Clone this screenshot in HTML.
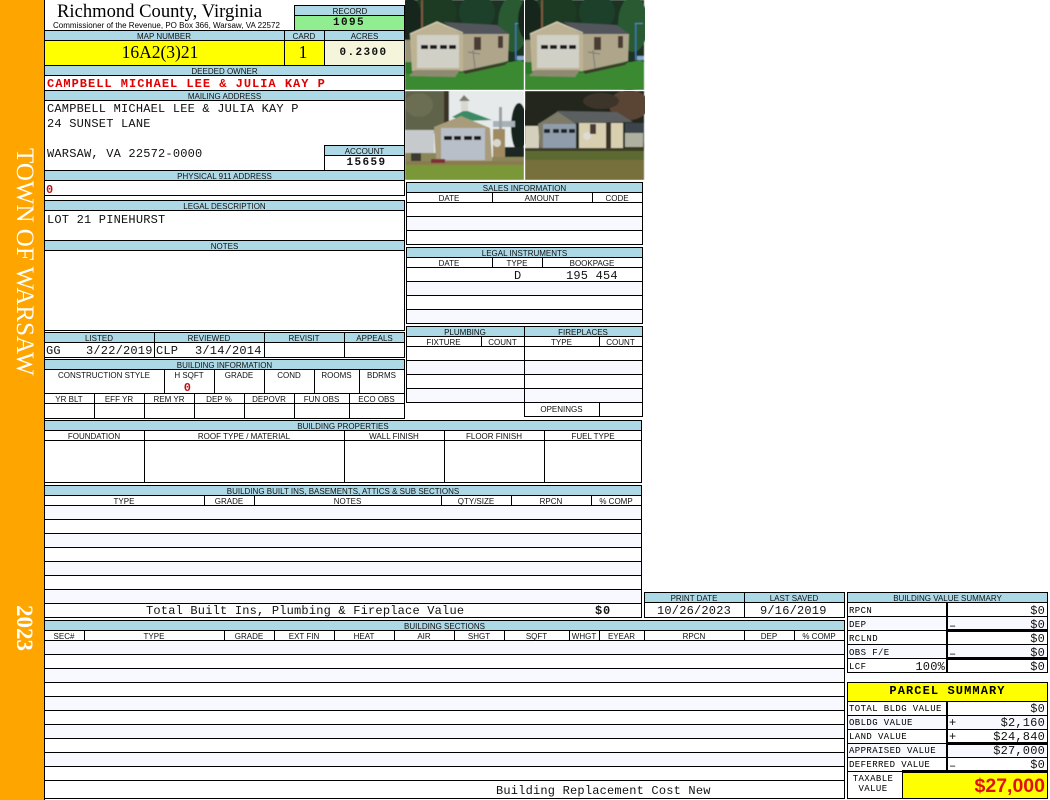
<!DOCTYPE html>
<html><head><meta charset="utf-8"><title>Richmond County, Virginia</title>
<style>
html,body{margin:0;padding:0;background:#fff}
body{position:relative;width:1050px;height:800px;overflow:hidden;font-family:"Liberation Sans",Arial,sans-serif;color:#000}
div,b,u,s,em,svg{position:absolute;display:block}
b{height:1px;background:#000}
u{width:1px;background:#000}
s{background:#add8e6}
em{background:#f8f8ff}
.t{font:8px/10px "Liberation Sans",Arial,sans-serif;text-align:center;height:10px;white-space:nowrap;color:#111;margin-top:1px}
.m{font:12px/14px "Liberation Mono",monospace;letter-spacing:.2px;white-space:pre;color:#111}
.k{font:bold 11px/14px "Liberation Mono",monospace;letter-spacing:1.4px;text-align:center;white-space:pre;color:#111}
.l{font:9px/14px "Liberation Mono",monospace;letter-spacing:.4px;white-space:pre;color:#000}
.r{text-align:right}
</style></head><body>
<!-- sidebar -->
<div style="left:0;top:0;width:44px;height:800px;background:#ffa500"></div>
<u style="left:44px;top:0;height:800px"></u>
<div style="left:10px;top:148px;writing-mode:vertical-rl;font:25px/28px 'Liberation Serif',serif;color:#fff;white-space:nowrap">TOWN OF WARSAW</div>
<div style="left:11px;top:605px;writing-mode:vertical-rl;font:bold 23px/26px 'Liberation Serif',serif;color:#fff">2023</div>

<!-- title -->
<div style="left:57px;top:2px;font:18.6px/20px 'Liberation Serif',serif;white-space:nowrap">Richmond County, Virginia</div>
<div style="left:53px;top:21px;font:8px/10px 'Liberation Sans',sans-serif;white-space:nowrap;letter-spacing:.01px">Commissioner of the Revenue, PO Box 366, Warsaw, VA 22572</div>

<!-- record -->
<s style="left:295px;top:6px;width:110px;height:9px"></s>
<div style="left:295px;top:16px;width:110px;height:14px;background:#90ee90"></div>
<b style="left:294px;top:5px;width:111px"></b><b style="left:294px;top:15px;width:111px"></b>
<u style="left:294px;top:5px;height:26px"></u>
<div class="t" style="left:295px;top:6px;width:110px">RECORD</div>
<div class="k" style="left:294px;top:17px;width:110px;line-height:13px">1095</div>

<!-- map row -->
<s style="left:45px;top:31px;width:360px;height:9px"></s>
<div style="left:45px;top:41px;width:279px;height:24px;background:#ff0"></div>
<div style="left:325px;top:41px;width:79px;height:24px;background:#f5f5dc"></div>
<b style="left:44px;top:30px;width:361px"></b><b style="left:44px;top:40px;width:361px"></b><b style="left:44px;top:65px;width:361px"></b>
<u style="left:284px;top:30px;height:35px"></u><u style="left:324px;top:30px;height:35px"></u>
<div class="t" style="left:44px;top:31px;width:240px">MAP NUMBER</div>
<div class="t" style="left:284px;top:31px;width:40px">CARD</div>
<div class="t" style="left:324px;top:31px;width:81px">ACRES</div>
<div style="left:40px;top:42px;width:240px;text-align:center;font:17.5px/20px 'Liberation Serif',serif">16A2(3)21</div>
<div style="left:283px;top:42px;width:40px;text-align:center;font:17.5px/20px 'Liberation Serif',serif">1</div>
<div class="k" style="left:323px;top:45px;width:81px;line-height:16px">0.2300</div>

<!-- owner -->
<s style="left:45px;top:66px;width:360px;height:9px"></s>
<b style="left:44px;top:75px;width:361px"></b>
<div class="t" style="left:44px;top:66px;width:361px">DEEDED OWNER</div>
<div class="m" style="left:47px;top:77px;font-weight:bold;color:#e00000;letter-spacing:1px">CAMPBELL MICHAEL LEE &amp; JULIA KAY P</div>
<b style="left:44px;top:90px;width:361px"></b>
<s style="left:45px;top:91px;width:360px;height:9px"></s>
<b style="left:44px;top:100px;width:361px"></b>
<div class="t" style="left:44px;top:91px;width:361px">MAILING ADDRESS</div>
<div class="m" style="left:47px;top:102px">CAMPBELL MICHAEL LEE &amp; JULIA KAY P</div>
<div class="m" style="left:47px;top:117px">24 SUNSET LANE</div>
<div class="m" style="left:47px;top:147px">WARSAW, VA 22572-0000</div>
<s style="left:325px;top:146px;width:80px;height:9px"></s>
<b style="left:324px;top:145px;width:81px"></b><b style="left:324px;top:155px;width:81px"></b><u style="left:324px;top:145px;height:25px"></u>
<div class="t" style="left:324px;top:146px;width:81px">ACCOUNT</div>
<div class="k" style="left:326px;top:157px;width:81px;line-height:13px">15659</div>
<b style="left:44px;top:170px;width:361px"></b>
<s style="left:45px;top:171px;width:360px;height:9px"></s>
<b style="left:44px;top:180px;width:361px"></b>
<div class="t" style="left:44px;top:171px;width:361px">PHYSICAL 911 ADDRESS</div>
<div class="m" style="left:46px;top:183px;font-weight:bold;color:#c01010">0</div>
<b style="left:44px;top:195px;width:361px"></b>
<u style="left:404px;top:5px;height:190px"></u>

<!-- legal / notes -->
<b style="left:44px;top:200px;width:361px"></b>
<s style="left:45px;top:201px;width:359px;height:9px"></s>
<b style="left:44px;top:210px;width:361px"></b>
<div class="t" style="left:44px;top:201px;width:361px">LEGAL DESCRIPTION</div>
<div class="m" style="left:47px;top:213px">LOT 21 PINEHURST</div>
<b style="left:44px;top:240px;width:361px"></b>
<s style="left:45px;top:241px;width:359px;height:9px"></s>
<b style="left:44px;top:250px;width:361px"></b>
<div class="t" style="left:44px;top:241px;width:361px">NOTES</div>
<b style="left:44px;top:330px;width:361px"></b>
<u style="left:404px;top:200px;height:131px"></u>

<!-- listed -->
<b style="left:44px;top:332px;width:361px"></b>
<s style="left:45px;top:333px;width:359px;height:9px"></s>
<b style="left:44px;top:342px;width:361px"></b>
<b style="left:44px;top:357px;width:361px"></b>
<u style="left:404px;top:332px;height:26px"></u>
<u style="left:154px;top:332px;height:25px"></u><u style="left:264px;top:332px;height:25px"></u><u style="left:344px;top:332px;height:25px"></u>
<div class="t" style="left:44px;top:333px;width:110px">LISTED</div>
<div class="t" style="left:154px;top:333px;width:110px">REVIEWED</div>
<div class="t" style="left:264px;top:333px;width:80px">REVISIT</div>
<div class="t" style="left:344px;top:333px;width:61px">APPEALS</div>
<div class="m" style="left:46px;top:344px">GG</div><div class="m" style="left:86px;top:344px">3/22/2019</div>
<div class="m" style="left:156px;top:344px">CLP</div><div class="m" style="left:195px;top:344px">3/14/2014</div>

<!-- building info -->
<b style="left:44px;top:359px;width:361px"></b>
<s style="left:45px;top:360px;width:359px;height:9px"></s>
<b style="left:44px;top:369px;width:361px"></b>
<div class="t" style="left:44px;top:360px;width:361px">BUILDING INFORMATION</div>
<b style="left:44px;top:393px;width:361px"></b><b style="left:44px;top:403px;width:361px"></b><b style="left:44px;top:418px;width:361px"></b>
<u style="left:404px;top:359px;height:60px"></u>
<u style="left:164px;top:369px;height:24px"></u><u style="left:214px;top:369px;height:24px"></u><u style="left:264px;top:369px;height:24px"></u><u style="left:314px;top:369px;height:24px"></u><u style="left:359px;top:369px;height:24px"></u>
<b style="left:44px;top:379px;width:361px;background:#000;opacity:0"></b>
<div class="t" style="left:44px;top:370px;width:120px">CONSTRUCTION STYLE</div>
<div class="t" style="left:164px;top:370px;width:50px">H SQFT</div>
<div class="t" style="left:214px;top:370px;width:50px">GRADE</div>
<div class="t" style="left:264px;top:370px;width:50px">COND</div>
<div class="t" style="left:314px;top:370px;width:45px">ROOMS</div>
<div class="t" style="left:359px;top:370px;width:45px">BDRMS</div>
<div class="m" style="left:164px;top:381px;width:47px;text-align:center;font-weight:bold;color:#c01010">0</div>
<u style="left:94px;top:393px;height:25px"></u><u style="left:144px;top:393px;height:25px"></u><u style="left:194px;top:393px;height:25px"></u><u style="left:244px;top:393px;height:25px"></u><u style="left:294px;top:393px;height:25px"></u><u style="left:349px;top:393px;height:25px"></u>
<div class="t" style="left:44px;top:394px;width:50px">YR BLT</div>
<div class="t" style="left:94px;top:394px;width:50px">EFF YR</div>
<div class="t" style="left:144px;top:394px;width:50px">REM YR</div>
<div class="t" style="left:194px;top:394px;width:50px">DEP %</div>
<div class="t" style="left:244px;top:394px;width:50px">DEPOVR</div>
<div class="t" style="left:294px;top:394px;width:55px">FUN OBS</div>
<div class="t" style="left:349px;top:394px;width:55px">ECO OBS</div>

<!-- photos -->
<svg style="left:405px;top:0" width="240" height="181" viewBox="0 0 240 181">
<defs>
<filter id="f" x="0" y="0" width="100%" height="100%"><feGaussianBlur stdDeviation=".6"/></filter>
<g id="p1">
<rect width="119" height="90" fill="#1c3322"/>
<ellipse cx="30" cy="12" rx="22" ry="20" fill="#1a3a24"/><ellipse cx="72" cy="12" rx="18" ry="18" fill="#1f4029"/>
<ellipse cx="108" cy="24" rx="15" ry="28" fill="#2a5a33"/><ellipse cx="5" cy="20" rx="12" ry="22" fill="#14281c"/>
<rect x="16" y="0" width="2" height="28" fill="#7a5a3c"/>
<rect x="110" y="24" width="1.5" height="36" fill="#3a78a8"/><rect x="110" y="23" width="8" height="1" fill="#5a90b8"/>
<rect x="112" y="56" width="7" height="4" fill="#88a8d0"/>
<rect y="40" width="8" height="22" fill="#9a9478"/>
<polygon points="0,62 119,62 119,90 0,90" fill="#2f7a2c"/>
<polygon points="0,74 60,73 115,60 119,62 119,90 0,90" fill="#3a8a30"/>
<polygon points="58,34 104,34 103,61 58,71" fill="#aea58a"/>
<polygon points="38,22 92,25 104,34 58,34" fill="#53545c"/>
<polygon points="5,34 32,22 58,34 58,71 7,71" fill="#bdb394"/>
<polyline points="5,34 32,22 58,33" fill="none" stroke="#d8d2b8" stroke-width="1.2"/>
<rect x="12" y="35" width="42" height="33" fill="#d0d0c6"/>
<rect x="16" y="45" width="7" height="4" fill="#1d1d1d"/><rect x="25" y="45" width="7" height="4" fill="#1d1d1d"/><rect x="35" y="45" width="7" height="4" fill="#1d1d1d"/><rect x="44" y="45" width="7" height="4" fill="#1d1d1d"/>
<rect x="69" y="37" width="7" height="13" fill="#4a3c34"/><rect x="93" y="36" width="5" height="12" fill="#4a3c34"/>
<polygon points="10,70 55,70 50,77 4,76" fill="#8e8a72"/>
<polygon points="58,71 103,62 100,65 60,74" fill="#3a3a2a"/>
<path d="M68 50 L70 68 M63 52 L75 54" stroke="#777" stroke-width="1"/>
</g>
</defs>
<g filter="url(#f)">
<use href="#p1"/>
<use href="#p1" x="120"/>
<g transform="translate(0,91)">
<rect width="119" height="89" fill="#e6eaea"/>
<rect width="44" height="42" fill="#5f634a"/><ellipse cx="14" cy="14" rx="14" ry="12" fill="#6c6e52"/>
<rect x="39" y="0" width="5" height="32" fill="#3c3228"/>
<ellipse cx="114" cy="36" rx="8" ry="24" fill="#15201c"/>
<rect y="39" width="29" height="23" fill="#c6cacc"/>
<rect x="88" y="30" width="22" height="6" fill="#a8b0b8"/>
<polygon points="47,26 60,19 87,29 60,30" fill="#3a8a66"/>
<rect x="56" y="9" width="7" height="11" fill="#d8d8d0"/><polygon points="54,10 59,4 65,10" fill="#7a7a70"/>
<rect x="94" y="16" width="3" height="26" fill="#9aa0a4"/>
<polygon points="29,36 56,25 85,37 87,70 31,70" fill="#a89c7a"/>
<rect x="36" y="37" width="44" height="32" fill="#b8bfc8"/>
<rect x="39" y="45" width="8" height="4" fill="#1d1d1d"/><rect x="49" y="45" width="7" height="4" fill="#1d1d1d"/><rect x="59" y="45" width="8" height="4" fill="#1d1d1d"/><rect x="69" y="45" width="7" height="4" fill="#1d1d1d"/>
<rect x="88" y="38" width="12" height="29" fill="#a08a60"/><circle cx="92" cy="52" r="4" fill="#d8d8d0"/>
<rect x="100" y="56" width="19" height="10" fill="#1c2820"/>
<rect y="62" width="31" height="9" fill="#8a8658"/><rect x="87" y="66" width="32" height="6" fill="#8a8658"/>
<rect y="70" width="119" height="5" fill="#8a7a50"/><rect y="74" width="119" height="15" fill="#7a9838"/>
<rect x="6" y="62" width="10" height="8" fill="#3a3a32"/><rect x="26" y="68" width="14" height="4" fill="#7a3030"/>
</g>
<g transform="translate(120,91)">
<rect width="119" height="89" fill="#23261f"/>
<ellipse cx="104" cy="14" rx="20" ry="15" fill="#5a4436"/><ellipse cx="76" cy="10" rx="18" ry="8" fill="#3c342c"/>
<rect y="35" width="14" height="22" fill="#d4d0bc"/>
<rect x="100" y="32" width="19" height="20" fill="#3a444c"/>
<polygon points="14,33 33,20 92,21 108,31 50,32" fill="#5b5f60"/>
<polygon points="13,33 33,21 51,33 51,58 15,58" fill="#7e7a68"/>
<rect x="18" y="33" width="33" height="24" fill="#8f9cab"/>
<rect x="19" y="38" width="6" height="4" fill="#1e2226"/><rect x="28" y="38" width="6" height="4" fill="#1e2226"/><rect x="36" y="38" width="6" height="4" fill="#1e2226"/><rect x="44" y="38" width="6" height="4" fill="#1e2226"/>
<rect x="54" y="32" width="44" height="26" fill="#d8cfb0"/>
<rect x="81" y="32" width="5" height="25" fill="#3a3028"/><rect x="65" y="33" width="6" height="10" fill="#4a3a34"/>
<circle cx="62" cy="45" r="4" fill="#dcdcd4"/>
<rect x="100" y="42" width="18" height="14" fill="#b0b0a0"/>
<rect y="57" width="119" height="4" fill="#3c3c28"/>
<rect y="60" width="119" height="9" fill="#5c6a30"/><rect y="69" width="119" height="20" fill="#77703e"/>
</g>
</g>
<rect x="119" width="1" height="181" fill="#fff"/><rect y="90" width="240" height="1" fill="#fff"/>
</svg>

<!-- sales -->
<s style="left:407px;top:183px;width:235px;height:9px"></s>
<em style="left:407px;top:217px;width:235px;height:13px"></em>
<b style="left:406px;top:182px;width:237px"></b><b style="left:406px;top:192px;width:237px"></b><b style="left:406px;top:202px;width:237px"></b><b style="left:406px;top:216px;width:237px"></b><b style="left:406px;top:230px;width:237px"></b><b style="left:406px;top:244px;width:237px"></b>
<u style="left:406px;top:182px;height:62px"></u><u style="left:642px;top:182px;height:63px"></u>
<u style="left:492px;top:192px;height:10px"></u><u style="left:592px;top:192px;height:10px"></u>
<div class="t" style="left:406px;top:183px;width:237px">SALES INFORMATION</div>
<div class="t" style="left:406px;top:193px;width:86px">DATE</div>
<div class="t" style="left:492px;top:193px;width:100px">AMOUNT</div>
<div class="t" style="left:592px;top:193px;width:50px">CODE</div>

<!-- legal instruments -->
<s style="left:407px;top:248px;width:235px;height:9px"></s>
<em style="left:407px;top:282px;width:235px;height:13px"></em><em style="left:407px;top:310px;width:235px;height:13px"></em>
<b style="left:406px;top:247px;width:237px"></b><b style="left:406px;top:257px;width:237px"></b><b style="left:406px;top:267px;width:237px"></b><b style="left:406px;top:281px;width:237px"></b><b style="left:406px;top:295px;width:237px"></b><b style="left:406px;top:309px;width:237px"></b><b style="left:406px;top:323px;width:237px"></b>
<u style="left:406px;top:247px;height:76px"></u><u style="left:642px;top:247px;height:77px"></u>
<u style="left:492px;top:257px;height:10px"></u><u style="left:542px;top:257px;height:10px"></u>
<div class="t" style="left:406px;top:248px;width:237px">LEGAL INSTRUMENTS</div>
<div class="t" style="left:406px;top:258px;width:86px">DATE</div>
<div class="t" style="left:492px;top:258px;width:50px">TYPE</div>
<div class="t" style="left:542px;top:258px;width:100px">BOOKPAGE</div>
<div class="m" style="left:514px;top:269px">D</div>
<div class="m" style="left:566px;top:269px">195 454</div>

<!-- plumbing / fireplaces -->
<s style="left:407px;top:327px;width:235px;height:9px"></s>
<em style="left:407px;top:361px;width:235px;height:13px"></em><em style="left:407px;top:389px;width:235px;height:13px"></em>
<b style="left:406px;top:326px;width:237px"></b><b style="left:406px;top:336px;width:237px"></b><b style="left:406px;top:346px;width:237px"></b><b style="left:406px;top:360px;width:237px"></b><b style="left:406px;top:374px;width:237px"></b><b style="left:406px;top:388px;width:237px"></b><b style="left:406px;top:402px;width:237px"></b><b style="left:524px;top:416px;width:119px"></b>
<u style="left:406px;top:326px;height:76px"></u><u style="left:642px;top:326px;height:91px"></u><u style="left:524px;top:326px;height:90px"></u>
<u style="left:481px;top:336px;height:10px"></u><u style="left:599px;top:336px;height:10px"></u><u style="left:599px;top:402px;height:14px"></u>
<div class="t" style="left:406px;top:327px;width:118px">PLUMBING</div>
<div class="t" style="left:524px;top:327px;width:118px">FIREPLACES</div>
<div class="t" style="left:406px;top:337px;width:75px">FIXTURE</div>
<div class="t" style="left:481px;top:337px;width:43px">COUNT</div>
<div class="t" style="left:524px;top:337px;width:75px">TYPE</div>
<div class="t" style="left:599px;top:337px;width:43px">COUNT</div>
<div class="t" style="left:524px;top:404px;width:75px">OPENINGS</div>

<!-- building properties -->
<s style="left:45px;top:421px;width:596px;height:9px"></s>
<b style="left:44px;top:420px;width:598px"></b><b style="left:44px;top:430px;width:598px"></b><b style="left:44px;top:440px;width:598px"></b><b style="left:44px;top:482px;width:598px"></b>
<u style="left:641px;top:420px;height:63px"></u>
<u style="left:144px;top:430px;height:52px"></u><u style="left:344px;top:430px;height:52px"></u><u style="left:444px;top:430px;height:52px"></u><u style="left:544px;top:430px;height:52px"></u>
<div class="t" style="left:44px;top:421px;width:598px">BUILDING PROPERTIES</div>
<div class="t" style="left:44px;top:431px;width:100px">FOUNDATION</div>
<div class="t" style="left:144px;top:431px;width:200px">ROOF TYPE / MATERIAL</div>
<div class="t" style="left:344px;top:431px;width:100px">WALL FINISH</div>
<div class="t" style="left:444px;top:431px;width:100px">FLOOR FINISH</div>
<div class="t" style="left:544px;top:431px;width:98px">FUEL TYPE</div>

<!-- built-ins -->
<s style="left:45px;top:486px;width:596px;height:9px"></s>
<em style="left:45px;top:506px;width:596px;height:13px"></em><em style="left:45px;top:534px;width:596px;height:13px"></em><em style="left:45px;top:562px;width:596px;height:13px"></em><em style="left:45px;top:590px;width:596px;height:13px"></em>
<b style="left:44px;top:485px;width:598px"></b><b style="left:44px;top:495px;width:598px"></b><b style="left:44px;top:505px;width:598px"></b><b style="left:44px;top:519px;width:598px"></b><b style="left:44px;top:533px;width:598px"></b><b style="left:44px;top:547px;width:598px"></b><b style="left:44px;top:561px;width:598px"></b><b style="left:44px;top:575px;width:598px"></b><b style="left:44px;top:589px;width:598px"></b><b style="left:44px;top:603px;width:598px"></b><b style="left:44px;top:617px;width:598px"></b>
<u style="left:641px;top:485px;height:133px"></u>
<u style="left:204px;top:495px;height:10px"></u><u style="left:254px;top:495px;height:10px"></u><u style="left:441px;top:495px;height:10px"></u><u style="left:511px;top:495px;height:10px"></u><u style="left:591px;top:495px;height:10px"></u>
<div class="t" style="left:44px;top:486px;width:598px">BUILDING BUILT INS, BASEMENTS, ATTICS &amp; SUB SECTIONS</div>
<div class="t" style="left:44px;top:496px;width:160px">TYPE</div>
<div class="t" style="left:204px;top:496px;width:50px">GRADE</div>
<div class="t" style="left:254px;top:496px;width:187px">NOTES</div>
<div class="t" style="left:441px;top:496px;width:70px">QTY/SIZE</div>
<div class="t" style="left:511px;top:496px;width:80px">RPCN</div>
<div class="t" style="left:591px;top:496px;width:50px">% COMP</div>
<div class="m" style="left:146px;top:604px">Total Built Ins, Plumbing &amp; Fireplace Value</div>
<div class="m" style="left:595px;top:604px;font-weight:bold;letter-spacing:.8px">$0</div>

<!-- dates -->
<s style="left:645px;top:593px;width:199px;height:9px"></s>
<b style="left:644px;top:592px;width:201px"></b><b style="left:644px;top:602px;width:201px"></b><b style="left:644px;top:617px;width:201px"></b>
<u style="left:644px;top:592px;height:25px"></u><u style="left:744px;top:592px;height:25px"></u><u style="left:844px;top:592px;height:26px"></u>
<div class="t" style="left:644px;top:593px;width:100px">PRINT DATE</div>
<div class="t" style="left:744px;top:593px;width:100px">LAST SAVED</div>
<div class="m" style="left:657px;top:604px">10/26/2023</div>
<div class="m" style="left:760px;top:604px">9/16/2019</div>

<!-- building sections -->
<s style="left:45px;top:621px;width:799px;height:9px"></s>
<em style="left:45px;top:641px;width:799px;height:13px"></em><em style="left:45px;top:669px;width:799px;height:13px"></em><em style="left:45px;top:697px;width:799px;height:13px"></em><em style="left:45px;top:725px;width:799px;height:13px"></em><em style="left:45px;top:753px;width:799px;height:13px"></em>
<b style="left:44px;top:620px;width:801px"></b><b style="left:44px;top:630px;width:801px"></b><b style="left:44px;top:640px;width:801px"></b><b style="left:44px;top:654px;width:801px"></b><b style="left:44px;top:668px;width:801px"></b><b style="left:44px;top:682px;width:801px"></b><b style="left:44px;top:696px;width:801px"></b><b style="left:44px;top:710px;width:801px"></b><b style="left:44px;top:724px;width:801px"></b><b style="left:44px;top:738px;width:801px"></b><b style="left:44px;top:752px;width:801px"></b><b style="left:44px;top:766px;width:801px"></b><b style="left:44px;top:780px;width:801px"></b><b style="left:44px;top:798px;width:801px"></b>
<u style="left:844px;top:620px;height:179px"></u>
<u style="left:84px;top:630px;height:10px"></u><u style="left:224px;top:630px;height:10px"></u><u style="left:274px;top:630px;height:10px"></u><u style="left:334px;top:630px;height:10px"></u><u style="left:394px;top:630px;height:10px"></u><u style="left:454px;top:630px;height:10px"></u><u style="left:504px;top:630px;height:10px"></u><u style="left:569px;top:630px;height:10px"></u><u style="left:599px;top:630px;height:10px"></u><u style="left:644px;top:630px;height:10px"></u><u style="left:744px;top:630px;height:10px"></u><u style="left:794px;top:630px;height:10px"></u>
<div class="t" style="left:44px;top:621px;width:801px">BUILDING SECTIONS</div>
<div class="t" style="left:44px;top:631px;width:40px">SEC#</div>
<div class="t" style="left:84px;top:631px;width:140px">TYPE</div>
<div class="t" style="left:224px;top:631px;width:50px">GRADE</div>
<div class="t" style="left:274px;top:631px;width:60px">EXT FIN</div>
<div class="t" style="left:334px;top:631px;width:60px">HEAT</div>
<div class="t" style="left:394px;top:631px;width:60px">AIR</div>
<div class="t" style="left:454px;top:631px;width:50px">SHGT</div>
<div class="t" style="left:504px;top:631px;width:65px">SQFT</div>
<div class="t" style="left:569px;top:631px;width:30px">WHGT</div>
<div class="t" style="left:599px;top:631px;width:45px">EYEAR</div>
<div class="t" style="left:644px;top:631px;width:100px">RPCN</div>
<div class="t" style="left:744px;top:631px;width:50px">DEP</div>
<div class="t" style="left:794px;top:631px;width:50px">% COMP</div>
<div class="m" style="left:496px;top:784px">Building Replacement Cost New</div>

<!-- value summary -->
<s style="left:848px;top:593px;width:199px;height:9px"></s>
<em style="left:848px;top:617px;width:199px;height:12px"></em><em style="left:848px;top:645px;width:199px;height:12px"></em>
<b style="left:847px;top:592px;width:201px"></b><b style="left:847px;top:602px;width:201px"></b><b style="left:847px;top:616px;width:201px"></b><b style="left:847px;top:630px;width:201px"></b><b style="left:847px;top:644px;width:201px"></b><b style="left:847px;top:658px;width:201px"></b><b style="left:847px;top:672px;width:201px"></b>
<b style="left:947px;top:629px;width:101px;height:3px"></b><b style="left:947px;top:657px;width:101px;height:3px"></b>
<u style="left:847px;top:592px;height:80px"></u><u style="left:1047px;top:592px;height:81px"></u><u style="left:946px;top:602px;width:2px;height:70px"></u>
<div class="t" style="left:847px;top:593px;width:201px">BUILDING VALUE SUMMARY</div>
<div class="l" style="left:849px;top:604px">RPCN</div>
<div class="l" style="left:849px;top:618px">DEP</div>
<div class="l" style="left:849px;top:632px">RCLND</div>
<div class="l" style="left:849px;top:646px">OBS F/E</div>
<div class="l" style="left:849px;top:660px">LCF</div>
<div class="m r" style="left:880px;top:660px;width:65px">100%</div>
<div class="m r" style="left:950px;top:604px;width:95px">$0</div>
<div class="m r" style="left:950px;top:618px;width:95px">$0</div>
<div class="m r" style="left:950px;top:632px;width:95px">$0</div>
<div class="m r" style="left:950px;top:646px;width:95px">$0</div>
<div class="m r" style="left:950px;top:660px;width:95px">$0</div>
<div class="m" style="left:949px;top:619px">–</div><div class="m" style="left:949px;top:647px">–</div>

<!-- parcel summary -->
<div style="left:848px;top:683px;width:199px;height:18px;background:#ff0"></div>
<div style="left:903px;top:772px;width:144px;height:26px;background:#ff0"></div>
<em style="left:848px;top:716px;width:199px;height:13px"></em><em style="left:848px;top:744px;width:199px;height:13px"></em>
<b style="left:847px;top:682px;width:201px"></b><b style="left:847px;top:701px;width:201px"></b><b style="left:847px;top:715px;width:201px"></b><b style="left:847px;top:729px;width:201px"></b><b style="left:847px;top:743px;width:201px"></b><b style="left:847px;top:757px;width:201px"></b><b style="left:847px;top:771px;width:201px"></b><b style="left:847px;top:798px;width:201px"></b>
<b style="left:947px;top:742px;width:101px;height:3px"></b><b style="left:902px;top:770px;width:146px;height:3px"></b>
<u style="left:847px;top:682px;height:117px"></u><u style="left:1047px;top:682px;height:117px"></u><u style="left:946px;top:701px;width:2px;height:70px"></u><u style="left:902px;top:771px;height:28px"></u>
<div style="left:847px;top:684px;width:201px;text-align:center;font:bold 12px/14px 'Liberation Mono',monospace;letter-spacing:1.1px;white-space:pre">PARCEL SUMMARY</div>
<div class="l" style="left:849px;top:702px">TOTAL BLDG VALUE</div>
<div class="l" style="left:849px;top:716px">OBLDG VALUE</div>
<div class="l" style="left:849px;top:730px">LAND VALUE</div>
<div class="l" style="left:849px;top:744px">APPRAISED VALUE</div>
<div class="l" style="left:849px;top:758px">DEFERRED VALUE</div>
<div class="m r" style="left:950px;top:702px;width:95px">$0</div>
<div class="m r" style="left:950px;top:716px;width:95px">$2,160</div>
<div class="m r" style="left:950px;top:730px;width:95px">$24,840</div>
<div class="m r" style="left:950px;top:744px;width:95px">$27,000</div>
<div class="m r" style="left:950px;top:758px;width:95px">$0</div>
<div class="m" style="left:949px;top:716px">+</div><div class="m" style="left:949px;top:730px">+</div><div class="m" style="left:949px;top:759px">–</div>
<div class="l" style="left:847px;top:774px;width:52px;text-align:center;line-height:10px">TAXABLE
VALUE</div>
<div class="r" style="left:903px;top:774px;width:142px;font:bold 19.5px/24px 'Liberation Sans',sans-serif;color:#e01010">$27,000</div>
</body></html>
